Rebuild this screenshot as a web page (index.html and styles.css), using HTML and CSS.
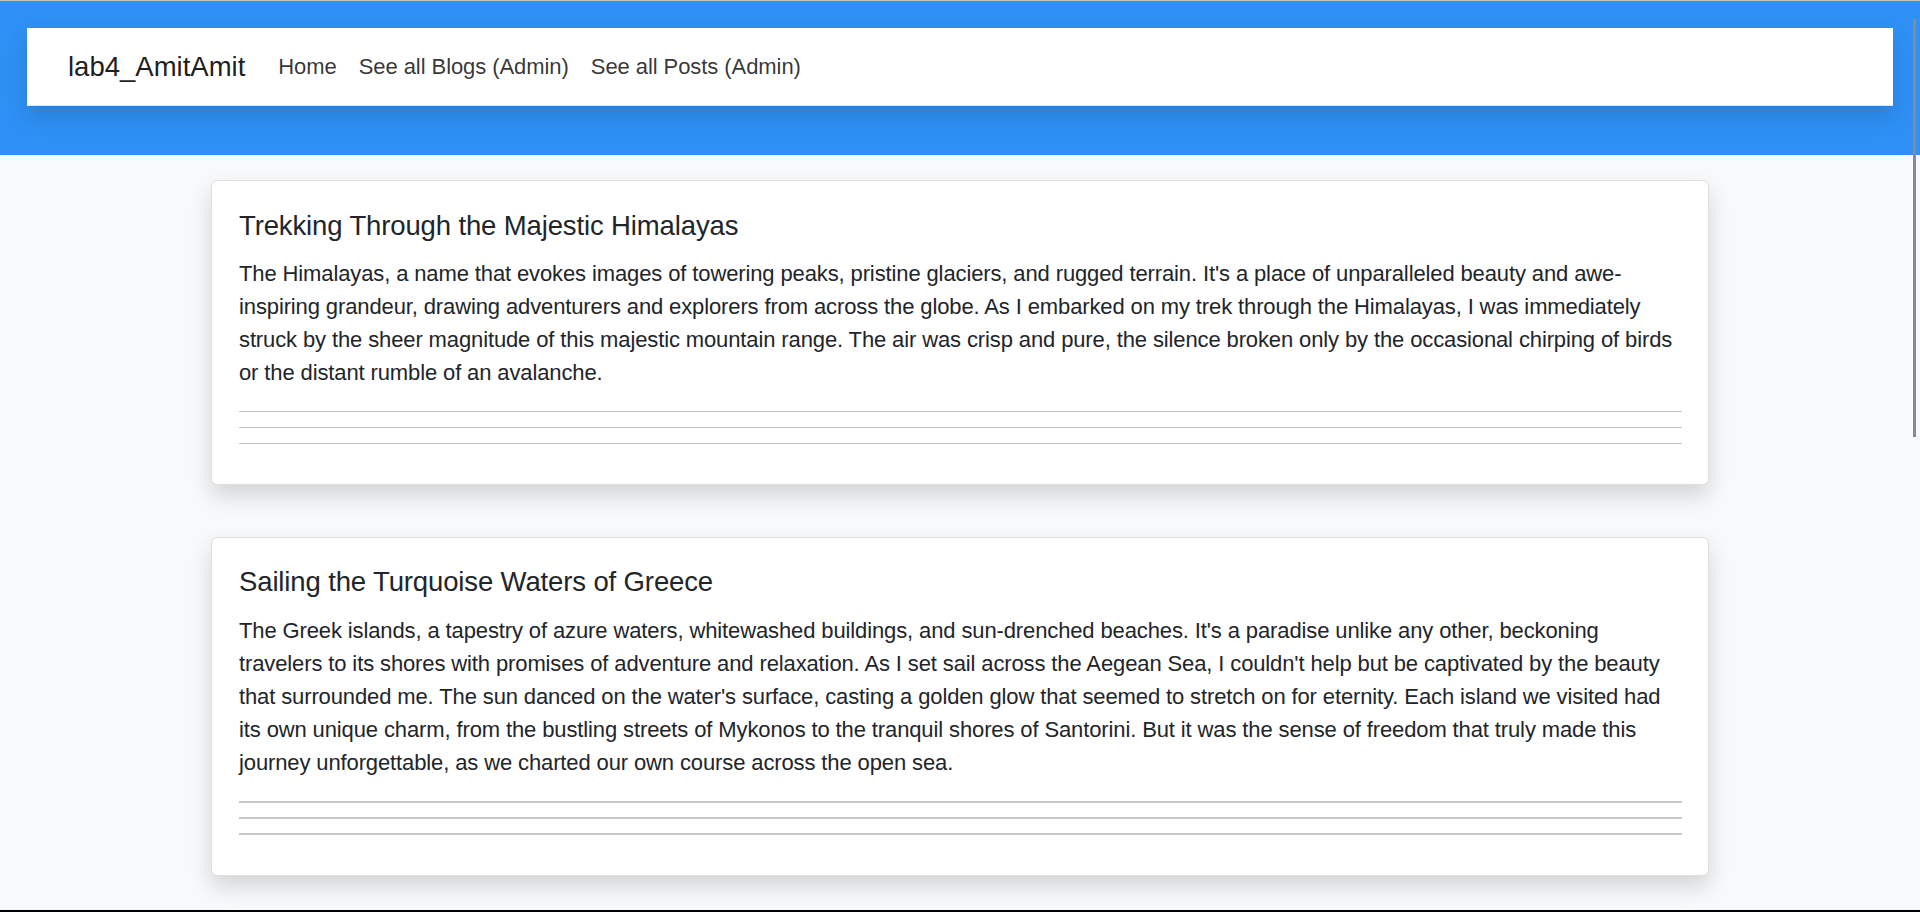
FILE: index.html
```html
<!DOCTYPE html>
<html lang="en">
<head>
<meta charset="utf-8">
<title>lab4_AmitAmit</title>
<link rel="stylesheet" href="styles.css">
</head>
<body>
<header class="topband">
  <nav class="navbar">
    <a class="brand" href="#">lab4_AmitAmit</a>
    <ul class="nav-list">
      <li><a class="nav-link" href="#">Home</a></li>
      <li><a class="nav-link" href="#">See all Blogs (Admin)</a></li>
      <li><a class="nav-link" href="#">See all Posts (Admin)</a></li>
    </ul>
  </nav>
</header>
<main class="content">
  <article class="card">
    <h5 class="card-title">Trekking Through the Majestic Himalayas</h5>
    <p class="card-text">The Himalayas, a name that evokes images of towering peaks, pristine glaciers, and rugged terrain. It's a place of unparalleled beauty and awe-inspiring grandeur, drawing adventurers and explorers from across the globe. As I embarked on my trek through the Himalayas, I was immediately struck by the sheer magnitude of this majestic mountain range. The air was crisp and pure, the silence broken only by the occasional chirping of birds or the distant rumble of an avalanche.</p>
    <div class="rules">
      <hr class="rule">
      <hr class="rule">
      <hr class="rule">
    </div>
  </article>
  <article class="card">
    <h5 class="card-title">Sailing the Turquoise Waters of Greece</h5>
    <p class="card-text">The Greek islands, a tapestry of azure waters, whitewashed buildings, and sun-drenched beaches. It's a paradise unlike any other, beckoning travelers to its shores with promises of adventure and relaxation. As I set sail across the Aegean Sea, I couldn't help but be captivated by the beauty that surrounded me. The sun danced on the water's surface, casting a golden glow that seemed to stretch on for eternity. Each island we visited had its own unique charm, from the bustling streets of Mykonos to the tranquil shores of Santorini. But it was the sense of freedom that truly made this journey unforgettable, as we charted our own course across the open sea.</p>
    <div class="rules rules-bold">
      <hr class="rule">
      <hr class="rule">
      <hr class="rule">
    </div>
  </article>
</main>
<div class="scroll-thumb"></div>
<div class="frame-bottom"></div>
</body>
</html>
```
FILE: styles.css
```css
html {
  scrollbar-width: none;
}
html::-webkit-scrollbar {
  display: none;
}
body {
  margin: 0;
  font-family: "Liberation Sans", Arial, sans-serif;
  font-size: 22px;
  line-height: 1.5;
  color: #212529;
  background: #f8f9fa;
}
.topband {
  background: #2e90f4;
  border-top: 1px solid #c4c4c4;
  padding: 27px 27px 49px;
}
.navbar {
  display: flex;
  align-items: center;
  background: #fff;
  border-bottom: 1px solid #dee2e6;
  box-shadow: 0 11px 22px rgba(0, 0, 0, 0.12);
  padding: 11px 41px;
}
.brand {
  font-size: 27.5px;
  line-height: 41.25px;
  padding: 6.875px 0;
  margin-right: 22px;
  color: rgba(0, 0, 0, 0.9);
  text-decoration: none;
}
.nav-list {
  display: flex;
  list-style: none;
  margin: 0;
  padding: 0;
}
.nav-link {
  display: block;
  padding: 11px;
  color: rgba(0, 0, 0, 0.8);
  text-decoration: none;
  letter-spacing: -0.07px;
}
.content {
  padding-top: 25px;
}
.card {
  box-sizing: border-box;
  width: 1498px;
  margin: 0 auto 52px;
  background: #fff;
  border: 1px solid rgba(0, 0, 0, 0.125);
  border-radius: 6px;
  box-shadow: 0 11px 22px rgba(0, 0, 0, 0.15);
  padding: 27.5px 26px 27.5px 27px;
}
.card-title {
  margin: 0 0 15.4px;
  font-size: 27.5px;
  line-height: 33px;
  font-weight: 500;
  letter-spacing: -0.13px;
}
.card-text {
  margin: 0 0 22px;
  letter-spacing: -0.12px;
}
.rules {
  display: flex;
  flex-direction: column;
  gap: 15px;
  padding-bottom: 12.5px;
}
.rule {
  margin: 0;
  border: 0;
  border-top: 1px solid #c4c4c4;
}
.rules-bold {
  gap: 14px;
}
.rules-bold .rule {
  border-top: 2px solid #c8c8c8;
}
.scroll-thumb {
  position: fixed;
  top: 19px;
  right: 4px;
  width: 3px;
  height: 418px;
  background: #8a8a8a;
}
.frame-bottom {
  position: fixed;
  left: 0;
  right: 0;
  bottom: 0;
  height: 2px;
  background: #000;
}
```
